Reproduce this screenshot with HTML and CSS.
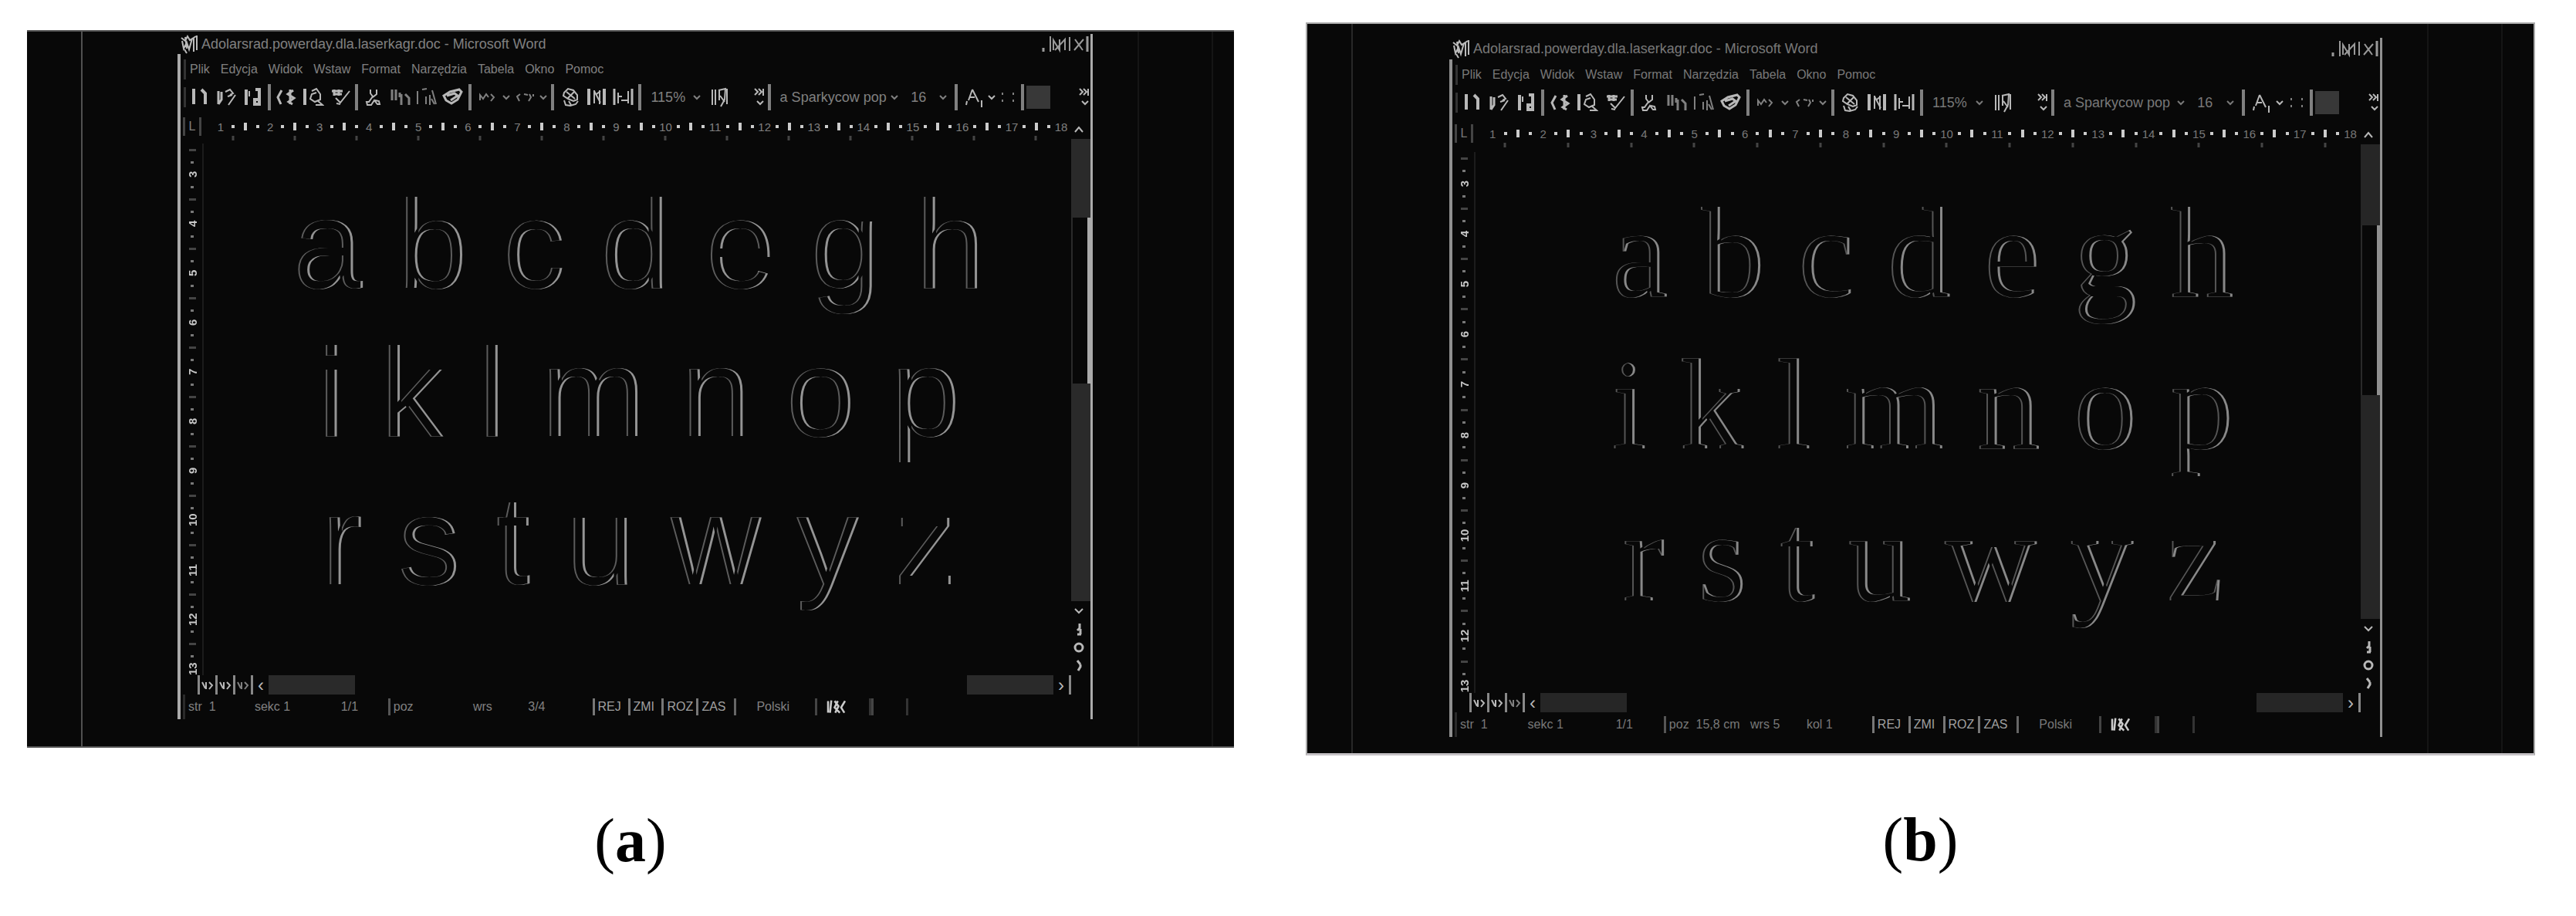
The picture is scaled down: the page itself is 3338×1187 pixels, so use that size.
FILE: index.html
```html
<!DOCTYPE html>
<html lang="pl">
<head>
    <meta charset="utf-8">
    <title>Microsoft Word</title>
    <link rel="stylesheet" href="styles.css">
    <script src="script.js" defer></script>
</head>
<body>
    <svg class="defs" width="0" height="0" aria-hidden="true">
        <!-- keeps only the left and right edges of the glyphs -->
        <filter id="edges" x="0" y="0" width="1" height="1" color-interpolation-filters="sRGB">
            <feOffset in="SourceGraphic" dx="-3" result="left"/>
            <feComposite in="SourceGraphic" in2="left" operator="out" result="right-edge"/>
            <feOffset in="SourceGraphic" dx="2" result="right"/>
            <feComposite in="SourceGraphic" in2="right" operator="out"/>
            <feComponentTransfer result="left-edge"><feFuncA type="linear" slope="0.6"/></feComponentTransfer>
            <feMerge><feMergeNode in="right-edge"/><feMergeNode in="left-edge"/></feMerge>
        </filter>
        <symbol id="word" viewBox="0 0 26 26"><path d="M2 5l5 4 3-6 3 5 8-5M3 9l2 10 4-8 3 9 4-14M7 4l2 15M18 5v18M22 2v19M6 20l3 5" stroke-width="2"/></symbol>
        <symbol id="new" viewBox="0 0 28 32"><path d="M7 5v20" stroke-width="4"/><path d="M17 6l5 5v14" stroke-width="4"/></symbol>
        <symbol id="open" viewBox="0 0 28 32"><path d="M4 8v17M8 9v10l-4 6" stroke-width="3"/><path d="M13 9l6-3 4 5-4 2M26 13l-9 13M16 15l6-2" stroke-width="2"/></symbol>
        <symbol id="save" viewBox="0 0 28 32"><path d="M6 6v20M18 6h5v19h-6v-6h5" stroke-width="4"/><path d="M10 8v7" stroke-width="2"/></symbol>
        <symbol id="print" viewBox="0 0 28 32"><path d="M8 7l-5 9 4 9" stroke-width="3"/><path d="M23 7l-7 5 8 5-7 5 5 3M19 6v19" stroke-width="3"/></symbol>
        <symbol id="preview" viewBox="0 0 28 32"><path d="M3 5v21" stroke-width="4"/><path d="M12 8l6-3 5 7v7l-7 3-6-4 2-6 6-2M19 20l7 6h-9" stroke-width="2"/></symbol>
        <symbol id="spell" viewBox="0 0 28 32"><path d="M4 8h14M6 12h11M7 6v8M13 6v8" stroke-width="3"/><path d="M27 8L15 23l-6-6M10 24l5 1" stroke-width="2"/></symbol>
        <symbol id="cut" viewBox="0 0 28 32"><path d="M10 6v5l3 4-5 7h-3l1 4h5l4-6 4 5h3l-1-4-5-1M18 6v6l-5 4" stroke-width="2"/></symbol>
        <symbol id="copy" viewBox="0 0 28 32"><path d="M3 6v14M8 6v14M13 10v6M15 12v14M20 12l5 5v9" stroke-width="3"/></symbol>
        <symbol id="paste" viewBox="0 0 28 32"><path d="M2 8v17M8 6l6-1M13 15v10M18 13v13M21 7l5 18M20 18l4 7" stroke-width="2"/></symbol>
        <symbol id="brush" viewBox="0 0 28 32"><path d="M2 14l8-5 12-3 3 3-5 10-8 5-7-4zM6 14l10-3 4 3-9 6" stroke-width="3"/></symbol>
        <symbol id="undo" viewBox="0 0 28 32"><path d="M4 20v-7l4 5 4-6 3 4M18 12l4 4-4 5" stroke-width="2"/></symbol>
        <symbol id="redo" viewBox="0 0 28 32"><path d="M8 12l-4 3 3 6M13 12l5 1M20 12l2 4-3 5M25 12v3" stroke-width="2"/></symbol>
        <symbol id="link" viewBox="0 0 28 32"><path d="M6 10l5-5 7 2 5 6v6l-5 2-7-3-6-4zM9 9l11 9M20 8l-9 9M6 20l2 6 6 1 7-2 3-4M12 21l3 5" stroke-width="2"/></symbol>
        <symbol id="table" viewBox="0 0 28 32"><path d="M4 5v21M24 5v21" stroke-width="4"/><path d="M11 7v17M11 8l8 15M18 7v18M14 12l5-4" stroke-width="2"/></symbol>
        <symbol id="columns" viewBox="0 0 28 32"><path d="M3 5v21M26 5v21" stroke-width="3"/><path d="M8 10v14M12 20h9M8 15h5M21 8v16" stroke-width="2"/></symbol>
        <symbol id="help" viewBox="0 0 28 32"><path d="M5 6v20M9 6v20M14 6v14M13 7l9-2-1 14-5 9M15 14l6 8M24 5v20" stroke-width="2"/></symbol>
        <symbol id="color" viewBox="0 0 28 32"><path d="M5 26l1-5M8 20l5-14M13 6l8 16M10 16h6M25 20v9" stroke-width="2"/></symbol>
        <symbol id="more" viewBox="0 0 16 32"><path d="M2 5l4 4-4 4M7 5l4 4-4 4M13 5v9" stroke-width="2"/><path d="M5 21l4 4 4-4" stroke-width="2"/></symbol>
        <symbol id="down" viewBox="0 0 14 32"><path d="M3 14l4 4 4-4" stroke-width="2"/></symbol>
        <symbol id="dots" viewBox="0 0 14 32"><path d="M7 10v3M7 19v3" stroke-width="2"/></symbol>
        <symbol id="tick" viewBox="0 0 6 8"><path d="M3 1v6" stroke-width="3"/></symbol>
        <symbol id="win-buttons" viewBox="0 0 66 26"><path d="M5 18v5M62 3v20" stroke-width="3"/><path d="M14 3v20M18 21V8l8 13V7M20 21L33 7v14M39 4v18M46 7l10 14M57 7L45 21" stroke-width="2"/></symbol>
        <symbol id="up" viewBox="0 0 20 20"><path d="M5 13l5-6 5 6" stroke-width="2"/></symbol>
        <symbol id="caret" viewBox="0 0 20 20"><path d="M5 8l5 5 5-5" stroke-width="2"/></symbol>
        <symbol id="prev-page" viewBox="0 0 20 20"><path d="M11 3v6l-3 3M12 10v7M8 17h5" stroke-width="3"/></symbol>
        <symbol id="browse" viewBox="0 0 20 20"><circle cx="10" cy="10" r="5" stroke-width="3"/></symbol>
        <symbol id="next-page" viewBox="0 0 20 20"><path d="M8 3l4 5M12 8v3l-3 5" stroke-width="3"/></symbol>
        <symbol id="view" viewBox="0 0 20 24"><path d="M3 8l4 8M8 8v9M12 8l4 4-4 5" stroke-width="2"/></symbol>
        <symbol id="book" viewBox="0 0 34 26"><path d="M4 4v18M9 3L7 22M14 4l6 8-5 10M19 4l-5 10 8 8M30 4l-6 10 5 8" stroke-width="3"/></symbol>
    </svg>

    <main class="figures">
        <figure class="fig fig-a">
            <div class="panel" data-position="poz|wrs|3/4">
                <div class="side side-left"><i></i></div>
                <div class="side side-right"><i></i><i></i></div>
            </div>
            <figcaption>(<b>a</b>)</figcaption>
        </figure>
        <figure class="fig fig-b">
            <div class="panel" data-position="poz  15,8 cm|wrs 5|kol 1">
                <div class="side side-left"><i></i></div>
                <div class="side side-right"><i></i><i></i></div>
            </div>
            <figcaption>(<b>b</b>)</figcaption>
        </figure>
    </main>

    <!-- the same editor window goes into both panels -->
    <template id="window">
        <section class="window">
            <header class="titlebar">
                <svg class="logo"><use href="#word"/></svg>
                <h1>Adolarsrad.powerday.dla.laserkagr.doc - Microsoft Word</h1>
                <svg class="win-buttons"><use href="#win-buttons"/></svg>
            </header>
            <div class="frame">
                <nav class="menu">
                    <a href="#">Plik</a><a href="#">Edycja</a><a href="#">Widok</a><a href="#">Wstaw</a><a href="#">Format</a><a href="#">Narzędzia</a><a href="#">Tabela</a><a href="#">Okno</a><a href="#">Pomoc</a>
                </nav>
                <div class="toolbar">
                    <button class="tool" aria-label="Nowy"><svg><use href="#new"/></svg></button>
                    <button class="tool" aria-label="Otwórz"><svg><use href="#open"/></svg></button>
                    <button class="tool" aria-label="Zapisz"><svg><use href="#save"/></svg></button>
                    <i class="sep"></i>
                    <button class="tool" aria-label="Drukuj"><svg><use href="#print"/></svg></button>
                    <button class="tool" aria-label="Podgląd"><svg><use href="#preview"/></svg></button>
                    <button class="tool" aria-label="Pisownia"><svg><use href="#spell"/></svg></button>
                    <i class="sep"></i>
                    <button class="tool" aria-label="Wytnij"><svg><use href="#cut"/></svg></button>
                    <button class="tool dim" aria-label="Kopiuj"><svg><use href="#copy"/></svg></button>
                    <button class="tool dim" aria-label="Wklej"><svg><use href="#paste"/></svg></button>
                    <button class="tool" aria-label="Malarz formatów"><svg><use href="#brush"/></svg></button>
                    <i class="sep"></i>
                    <button class="tool dim" aria-label="Cofnij"><svg><use href="#undo"/></svg></button>
                    <button class="drop dim" aria-label="Lista cofania"><svg><use href="#down"/></svg></button>
                    <button class="tool dim" aria-label="Ponów"><svg><use href="#redo"/></svg></button>
                    <button class="drop dim" aria-label="Lista ponawiania"><svg><use href="#down"/></svg></button>
                    <i class="sep"></i>
                    <button class="tool" aria-label="Hiperłącze"><svg><use href="#link"/></svg></button>
                    <button class="tool" aria-label="Tabela"><svg><use href="#table"/></svg></button>
                    <button class="tool" aria-label="Kolumny"><svg><use href="#columns"/></svg></button>
                    <i class="sep"></i>
                    <label class="pick pick-zoom"><select aria-label="Powiększenie"><option>115%</option></select><svg><use href="#down"/></svg></label>
                    <button class="tool" aria-label="Pomoc"><svg><use href="#help"/></svg></button>
                    <button class="more" aria-label="Opcje paska"><svg><use href="#more"/></svg></button>
                    <i class="sep"></i>
                    <label class="pick pick-font"><select aria-label="Styl"><option>a Sparkycow pop</option></select><svg><use href="#down"/></svg></label>
                    <label class="pick pick-size"><select aria-label="Rozmiar"><option>16</option></select><svg><use href="#down"/></svg></label>
                    <i class="sep"></i>
                    <button class="tool" aria-label="Kolor czcionki"><svg><use href="#color"/></svg></button>
                    <button class="drop" aria-label="Kolory"><svg><use href="#down"/></svg></button>
                    <button class="drop dim" aria-label="Lista"><svg><use href="#dots"/></svg></button>
                    <button class="drop dim" aria-label="Wcięcie"><svg><use href="#dots"/></svg></button>
                    <i class="sep"></i>
                    <button class="swatch" aria-label="Wyróżnienie"></button>
                    <button class="more last" aria-label="Opcje paska"><svg><use href="#more"/></svg></button>
                </div>
                <div class="workspace">
                    <div class="corner">L</div>
                    <div class="hruler"><div class="scale"></div><div class="tabs"></div></div>
                    <div class="vruler"></div>
                    <article class="page">
                        <p>a b c d e g h</p>
                        <p>i k l m n o p</p>
                        <p>r s t u w y z</p>
                    </article>
                    <div class="vscroll">
                        <button aria-label="W górę"><svg><use href="#up"/></svg></button>
                        <i class="track track-top"></i>
                        <i class="thumb"></i>
                        <i class="track track-bottom"></i>
                        <button aria-label="W dół"><svg><use href="#caret"/></svg></button>
                        <button aria-label="Poprzednia strona"><svg><use href="#prev-page"/></svg></button>
                        <button aria-label="Wybierz obiekt"><svg><use href="#browse"/></svg></button>
                        <button aria-label="Następna strona"><svg><use href="#next-page"/></svg></button>
                    </div>
                </div>
                <div class="hscroll">
                    <button aria-label="Normalny"><svg><use href="#view"/></svg></button>
                    <button aria-label="Sieć Web"><svg><use href="#view"/></svg></button>
                    <button class="dim" aria-label="Wydruk"><svg><use href="#view"/></svg></button>
                    <button aria-label="W lewo">‹</button>
                    <i class="track"></i>
                    <i class="gap"></i>
                    <i class="track"></i>
                    <button class="right" aria-label="W prawo">›</button>
                </div>
                <footer class="status">
                    <span>str&nbsp; 1</span>
                    <span>sekc 1</span>
                    <span>1/1</span>
                    <div class="position"></div>
                    <b>REJ</b><b>ZMI</b><b>ROZ</b><b>ZAS</b>
                    <span class="lang">Polski</span>
                    <span class="cell"><svg><use href="#book"/></svg></span>
                    <span class="cell"></span>
                </footer>
            </div>
        </section>
    </template>
</body>
</html>
```

FILE: styles.css
```css
* {
    box-sizing: border-box;
}

body {
    margin: 0;
    background: #FFF;
    color: #000;
    font-family: "Liberation Sans", Arial, sans-serif;
}

svg {
    display: block;
    fill: none;
    stroke: currentColor;
}

.defs {
    position: absolute;
}

.figures {
    display: flex;
    align-items: flex-start;
    gap: 93px;
    padding: 29px 53px 0 35px;
}

.fig {
    margin: 0;
    min-width: 0;
}

.fig-a {
    flex: 1564 1 0;
    margin-top: 10px;
    --line: #AAA;
    --grey: #808080;
    --track: #2A2A2A;
}

.fig-b {
    flex: 1593 1 0;
    --line: #909090;
    --grey: #787878;
    --track: #262626;
}

figcaption {
    font-family: "Liberation Serif", "Times New Roman", serif;
    font-size: 80px;
    line-height: 100px;
    text-align: center;
}

.fig-a figcaption {
    margin-top: 70px;
}

.fig-b figcaption {
    margin-top: 59px;
}

/* dark picture around the window */

.panel {
    display: grid;
    background: #080808;
    color: var(--grey);
}

.fig-a .panel {
    grid-template-columns: 195fr 1186fr 183fr;
    border-top: 2px solid #555;
    border-bottom: 2px solid #555;
}

.fig-b .panel {
    grid-template-columns: 184fr 1209fr 196fr;
    border: 2px solid #AAA;
    border-bottom: 3px solid #C6C2C6;
}

.side {
    display: flex;
}

.side i {
    width: 2px;
    background: #151515;
}

.side-right {
    gap: 94px;
    padding-left: 58px;
}

.fig-a .side-left {
    padding-left: 70px;
}

.fig-a .side-left i {
    background: #505050;
}

.fig-b .side-left {
    padding-left: 57px;
}

.fig-b .side-left i {
    background: #282828;
}

/* window */

.window {
    min-width: 0;
    border-right: 3px solid var(--line);
}

.fig-a .window {
    margin: 3px 0 35px;
}

.fig-b .window {
    margin: 18px 0 21px;
}

.titlebar {
    display: flex;
    align-items: center;
    height: 26px;
    padding-left: 3px;
}

.fig-b .titlebar {
    height: 28px;
}

.logo {
    width: 26px;
    height: 26px;
    color: #BBB;
}

h1 {
    flex: 1;
    margin: 0;
    padding-left: 2px;
    font-size: 18px;
    font-weight: 400;
    line-height: 24px;
}

.win-buttons {
    width: 66px;
    height: 26px;
    color: #999;
}

.frame {
    border-left: 4px solid var(--line);
}

.menu {
    display: flex;
    align-items: center;
    gap: 14px;
    height: 40px;
    margin-left: 3px;
    padding-left: 9px;
    font-size: 16px;
}

.menu a {
    color: inherit;
    text-decoration: none;
}

.menu::before,
.toolbar::before {
    content: "";
    width: 3px;
    height: 26px;
    background: #333;
}

.menu::before {
    margin: 0 -9px 0 -8px;
}

button {
    display: flex;
    align-items: center;
    justify-content: center;
    min-width: 0;
    padding: 0;
    border: none;
    background: none;
    color: #B8B8B8;
    font: inherit;
    cursor: pointer;
}

.toolbar {
    display: flex;
    align-items: center;
    height: 32px;
    padding-left: 4px;
}

.toolbar svg {
    width: 28px;
    height: 32px;
    flex: none;
}

.tool {
    flex: 34 1 0;
}

.drop {
    flex: 14 1 0;
}

.more {
    flex: 16 1 0;
    margin-left: 26px;
}

.toolbar .drop svg,
.toolbar .pick svg {
    width: 14px;
}

.toolbar .more svg {
    width: 16px;
}

.dim {
    color: #808080;
}

.sep {
    width: 4px;
    height: 34px;
    margin: 0 3px;
    background: #808080;
}

.pick {
    display: flex;
    align-items: center;
    min-width: 0;
    padding: 0 5px 0 9px;
}

.pick-zoom {
    flex: 66 1 0;
}

.pick-font {
    flex: 154 1 0;
}

.pick-size {
    flex: 48 1 0;
}

select {
    flex: 1;
    min-width: 0;
    padding: 0;
    border: none;
    appearance: none;
    background: none;
    color: inherit;
    font: inherit;
    font-size: 18px;
}

.swatch {
    flex: 30 1 0;
    height: 30px;
    background: #383838;
}

.last {
    margin-left: 36px;
}

/* rulers, page and scroll bars */

.workspace {
    display: grid;
    grid-template-columns: 34px 1fr 25px;
    grid-template-rows: 44px auto;
}

.fig-b .workspace {
    grid-template-rows: 48px auto;
}

.corner {
    align-self: center;
    width: 24px;
    margin-left: 3px;
    border-left: 3px solid #444;
    border-right: 3px solid #444;
    font-size: 16px;
    line-height: 24px;
    text-align: center;
}

.hruler {
    padding-top: 11px;
}

.fig-b .hruler {
    padding-top: 13px;
}

.scale {
    display: flex;
    align-items: center;
    height: 22px;
    padding: 0 5px 0 10px;
    font-size: 15px;
}

.scale > * {
    display: flex;
    flex: 1 1 0;
    justify-content: center;
    min-width: 0;
}

.dot::before,
.bar::before {
    content: "";
    width: 4px;
    height: 4px;
    background: #CCC;
}

.bar::before {
    height: 10px;
}

.tabs {
    display: flex;
    justify-content: space-between;
    padding: 0 43px 0 31px;
    color: #444;
}

.tabs svg {
    width: 6px;
    height: 8px;
}

.vruler {
    grid-row: 2;
    display: flex;
    flex-direction: column;
    align-items: center;
    width: 28px;
    margin-left: 2px;
    border-right: 2px solid #1C1C1C;
    color: #C8C8C8;
    font-size: 15px;
    font-weight: 700;
}

.vruler > * {
    display: flex;
    flex: 1 1 0;
    align-items: center;
    justify-content: center;
    min-height: 0;
}

.vruler span {
    writing-mode: vertical-rl;
    rotate: 180deg;
}

.vruler .dot::before,
.vruler .bar::before {
    height: 3px;
    background: #777;
}

.vruler .bar::before {
    width: 9px;
    background: #444;
}

.page {
    grid-column: 2;
    min-height: 689px;
    padding-top: 35px;
    text-align: center;
}

.page p {
    margin: 0;
    color: #949494;
    font-size: 163px;
    line-height: 192px;
    filter: url(#edges);
}

.fig-b .page {
    min-height: 701px;
    padding: 32px 0 0 8px;
}

.fig-b .page p {
    color: #888;
    font-family: "Liberation Serif", "Times New Roman", serif;
    font-size: 167px;
    line-height: 197px;
}

.vscroll {
    grid-column: 3;
    grid-row: 1 / 3;
    display: flex;
    flex-direction: column;
    padding-top: 14px;
}

.vscroll button {
    height: 24px;
    margin-right: 5px;
}

.vscroll svg {
    width: 20px;
    height: 20px;
}

.track {
    background: var(--track);
}

.track-top {
    flex: 103 1 0;
}

.thumb {
    flex: 216 1 0;
    border-left: 2px solid #2A2A2A;
    border-right: 4px solid var(--line);
}

.track-bottom {
    flex: 284 1 0;
}

.hscroll {
    display: flex;
    height: 25px;
    padding: 0 25px 0 22px;
}

.hscroll button {
    width: 23px;
    border-left: 3px solid #888;
    font-size: 24px;
    line-height: 24px;
}

.hscroll svg {
    width: 20px;
    height: 24px;
}

.hscroll .track {
    width: 112px;
}

.hscroll .gap {
    flex: 1;
}

.hscroll .right {
    border-left: none;
    border-right: 3px solid #888;
}

.status {
    display: grid;
    grid-template-columns: 86fr 112fr 61fr 265fr 46fr 44fr 45fr 49fr 105fr 73fr 48fr 236fr;
    align-items: center;
    height: 32px;
    margin-left: 3px;
    padding-left: 4px;
    border-left: 3px solid #2A2A2A;
    font-size: 16px;
    line-height: 22px;
    white-space: nowrap;
}

.position {
    display: grid;
    grid-template-columns: 104fr 72fr 84fr;
    padding-left: 4px;
    border-left: 3px solid #555;
}

.position span {
    white-space: pre;
}

.status b {
    padding-left: 4px;
    border-left: 3px solid #777;
    color: #A0A0A0;
    font-weight: 400;
}

.lang {
    padding-left: 26px;
    border-left: 3px solid #666;
}

.cell {
    height: 22px;
    padding-left: 8px;
    border-left: 3px solid #444;
    border-right: 3px solid #333;
    color: #CCC;
}

.cell svg {
    width: 34px;
    height: 22px;
}
```

FILE: script.js
```javascript
function mark(parent, tag, cls, text) {
    var el = document.createElement(tag);
    if (cls) el.className = cls;
    if (text) el.textContent = text;
    parent.appendChild(el);
}

document.querySelectorAll(".panel").forEach(function(panel) {
    var win = document.getElementById("window").content.cloneNode(true);
    var position = win.querySelector(".position");
    panel.dataset.position.split("|").forEach(function(text) {
        mark(position, "span", "", text);
    });
    panel.insertBefore(win, panel.querySelector(".side-right"));
});

// horizontal: 1 . | . 2 . | . 3 ... 18
document.querySelectorAll(".scale").forEach(function(scale) {
    for (var n = 1; n <= 18; n++) {
        mark(scale, "span", "", String(n));
        if (n < 18) {
            mark(scale, "i", "dot");
            mark(scale, "i", "bar");
            mark(scale, "i", "dot");
        }
    }
});

// vertical: | . 3 . | . 4 ... 13
document.querySelectorAll(".vruler").forEach(function(ruler) {
    for (var n = 3; n <= 13; n++) {
        if (n > 3) mark(ruler, "i", "dot");
        mark(ruler, "i", "bar");
        mark(ruler, "i", "dot");
        mark(ruler, "span", "", String(n));
    }
});

document.querySelectorAll(".tabs").forEach(function(tabs) {
    for (var i = 0; i < 14; i++) {
        tabs.insertAdjacentHTML("beforeend", '<svg><use href="#tick"/></svg>');
    }
});
```
